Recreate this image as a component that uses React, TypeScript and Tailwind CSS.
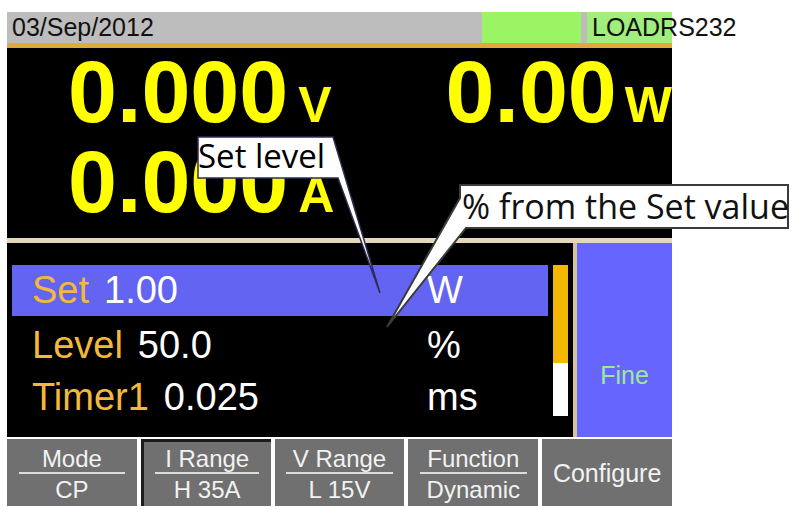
import React from 'react';

const rows = [
  { label: 'Set', value: '1.00', unit: 'W', active: true },
  { label: 'Level', value: '50.0', unit: '%', active: false },
  { label: 'Timer1', value: '0.025', unit: 'ms', active: false },
];

const keys = [
  { top: 'Mode', bottom: 'CP', pressed: false },
  { top: 'I Range', bottom: 'H 35A', pressed: true },
  { top: 'V Range', bottom: 'L 15V', pressed: false },
  { top: 'Function', bottom: 'Dynamic', pressed: false },
];

function Reading({ value, unit }: { value: string; unit: string }) {
  return (
    <div className="flex items-baseline text-[#ffff00] font-bold">
      <span className="text-[88px] leading-[88px]">{value}</span>
      <span className="ml-[10px] text-[50px] leading-[50px]">{unit}</span>
    </div>
  );
}

export default function App() {
  return (
    <div className="relative w-[793px] h-[510px] overflow-hidden bg-white pl-[7px] pt-[12px] font-['Liberation_Sans',Arial,sans-serif]">
      <div className="w-[665px]">
        {/* STATUS BAR */}
        <div className="flex h-[31px] bg-[#bdbdbd] text-[25px] leading-[31px] text-[#111]">
          <span className="pl-[5px]">03/Sep/2012</span>
          <div className="ml-auto w-[99px] bg-[#9af464]" />
          <div className="ml-[6px] w-[85px] bg-[#a2ee7c] pl-[5px] whitespace-nowrap">LOADRS232</div>
        </div>
        <div className="h-[5px] bg-[#e2a83a]" />

        {/* MEASUREMENTS */}
        <div className="h-[190px] bg-black">
          <div className="flex">
            <div className="ml-[61px] w-[323px]">
              <Reading value="0.000" unit="V" />
            </div>
            <div className="ml-[61px]">
              <div className="flex items-baseline text-[#ffff00] font-bold">
                <span className="text-[88px] leading-[88px]">0.00</span>
                <span className="ml-[8px] text-[50px] leading-[50px]">W</span>
              </div>
            </div>
          </div>
          <div className="mt-[2px] ml-[61px]">
            <Reading value="0.000" unit="A" />
          </div>
        </div>
        <div className="h-[5px] bg-[#e3d8bc]" />

        {/* SETTINGS */}
        <div className="flex h-[194px]">
          <div className="flex w-[570px] bg-black pl-[5px] pt-[22px] border-r-[4px] border-[#d6c398]">
            <div className="w-[536px]">
              {rows.map((row, i) => (
                <div
                  key={row.label}
                  className={`flex items-center pl-[20px] text-[38px] ${
                    row.active ? 'h-[51px] bg-[#6464f2]' : 'h-[52px]'
                  } ${i === 1 ? 'mt-[3px]' : ''}`}
                >
                  <div className="w-[395px] whitespace-nowrap">
                    <span className="text-[#f3b93a]">{row.label}</span>
                    <span className="ml-[15px] text-white">{row.value}</span>
                  </div>
                  <span className="text-white">{row.unit}</span>
                </div>
              ))}
            </div>
            <div className="ml-[5px] flex h-[151px] w-[15px] flex-col">
              <div className="h-[98px] bg-[#f5b800]" />
              <div className="flex-1 bg-white" />
            </div>
          </div>
          <div className="flex-1 bg-[#6666ff] pt-[120px] text-center text-[25px] leading-[25px] text-[#9ce89c]">
            Fine
          </div>
        </div>

        {/* SOFT KEYS */}
        <div className="mt-[2px] grid grid-cols-5 gap-[4px] text-[24px] leading-[24px] text-[#f2f2f2]">
          {keys.map((k) => (
            <div
              key={k.top}
              className={`flex h-[67px] flex-col items-center bg-[#707070] ${
                k.pressed ? 'border-l-[3px] border-t-[3px] border-[#1c1c1c] pt-[5px]' : 'pt-[8px]'
              }`}
            >
              <span>{k.top}</span>
              <div className="mt-[1px] h-[2px] w-[82%] bg-[#dcdcdc]" />
              <span className="mt-[4px]">{k.bottom}</span>
            </div>
          ))}
          <div className="flex h-[67px] items-center justify-center bg-[#707070] text-[25px]">
            Configure
          </div>
        </div>
      </div>

      {/* CALLOUTS */}
      <svg className="pointer-events-none absolute left-0 top-0" width="793" height="510" viewBox="0 0 793 510">
        <path d="M198 137 L333 137 L380 293 L338 178 L198 178 Z" fill="#fff" stroke="#2c2c55" strokeWidth="1.5" />
        <path d="M460 185 H788 V228 H466 L387 327 L460 198 Z" fill="#fff" stroke="#3a3a3a" strokeWidth="2" />
      </svg>
      <div className="absolute left-[198px] top-[137px] font-['Open_Sans',sans-serif] text-[33px] leading-[38px] text-black">
        Set level
      </div>
      <div className="absolute left-[462px] top-[185px] whitespace-nowrap font-['Open_Sans',sans-serif] text-[34px] leading-[43px] text-[#111]">
        % from the Set value
      </div>
    </div>
  );
}
